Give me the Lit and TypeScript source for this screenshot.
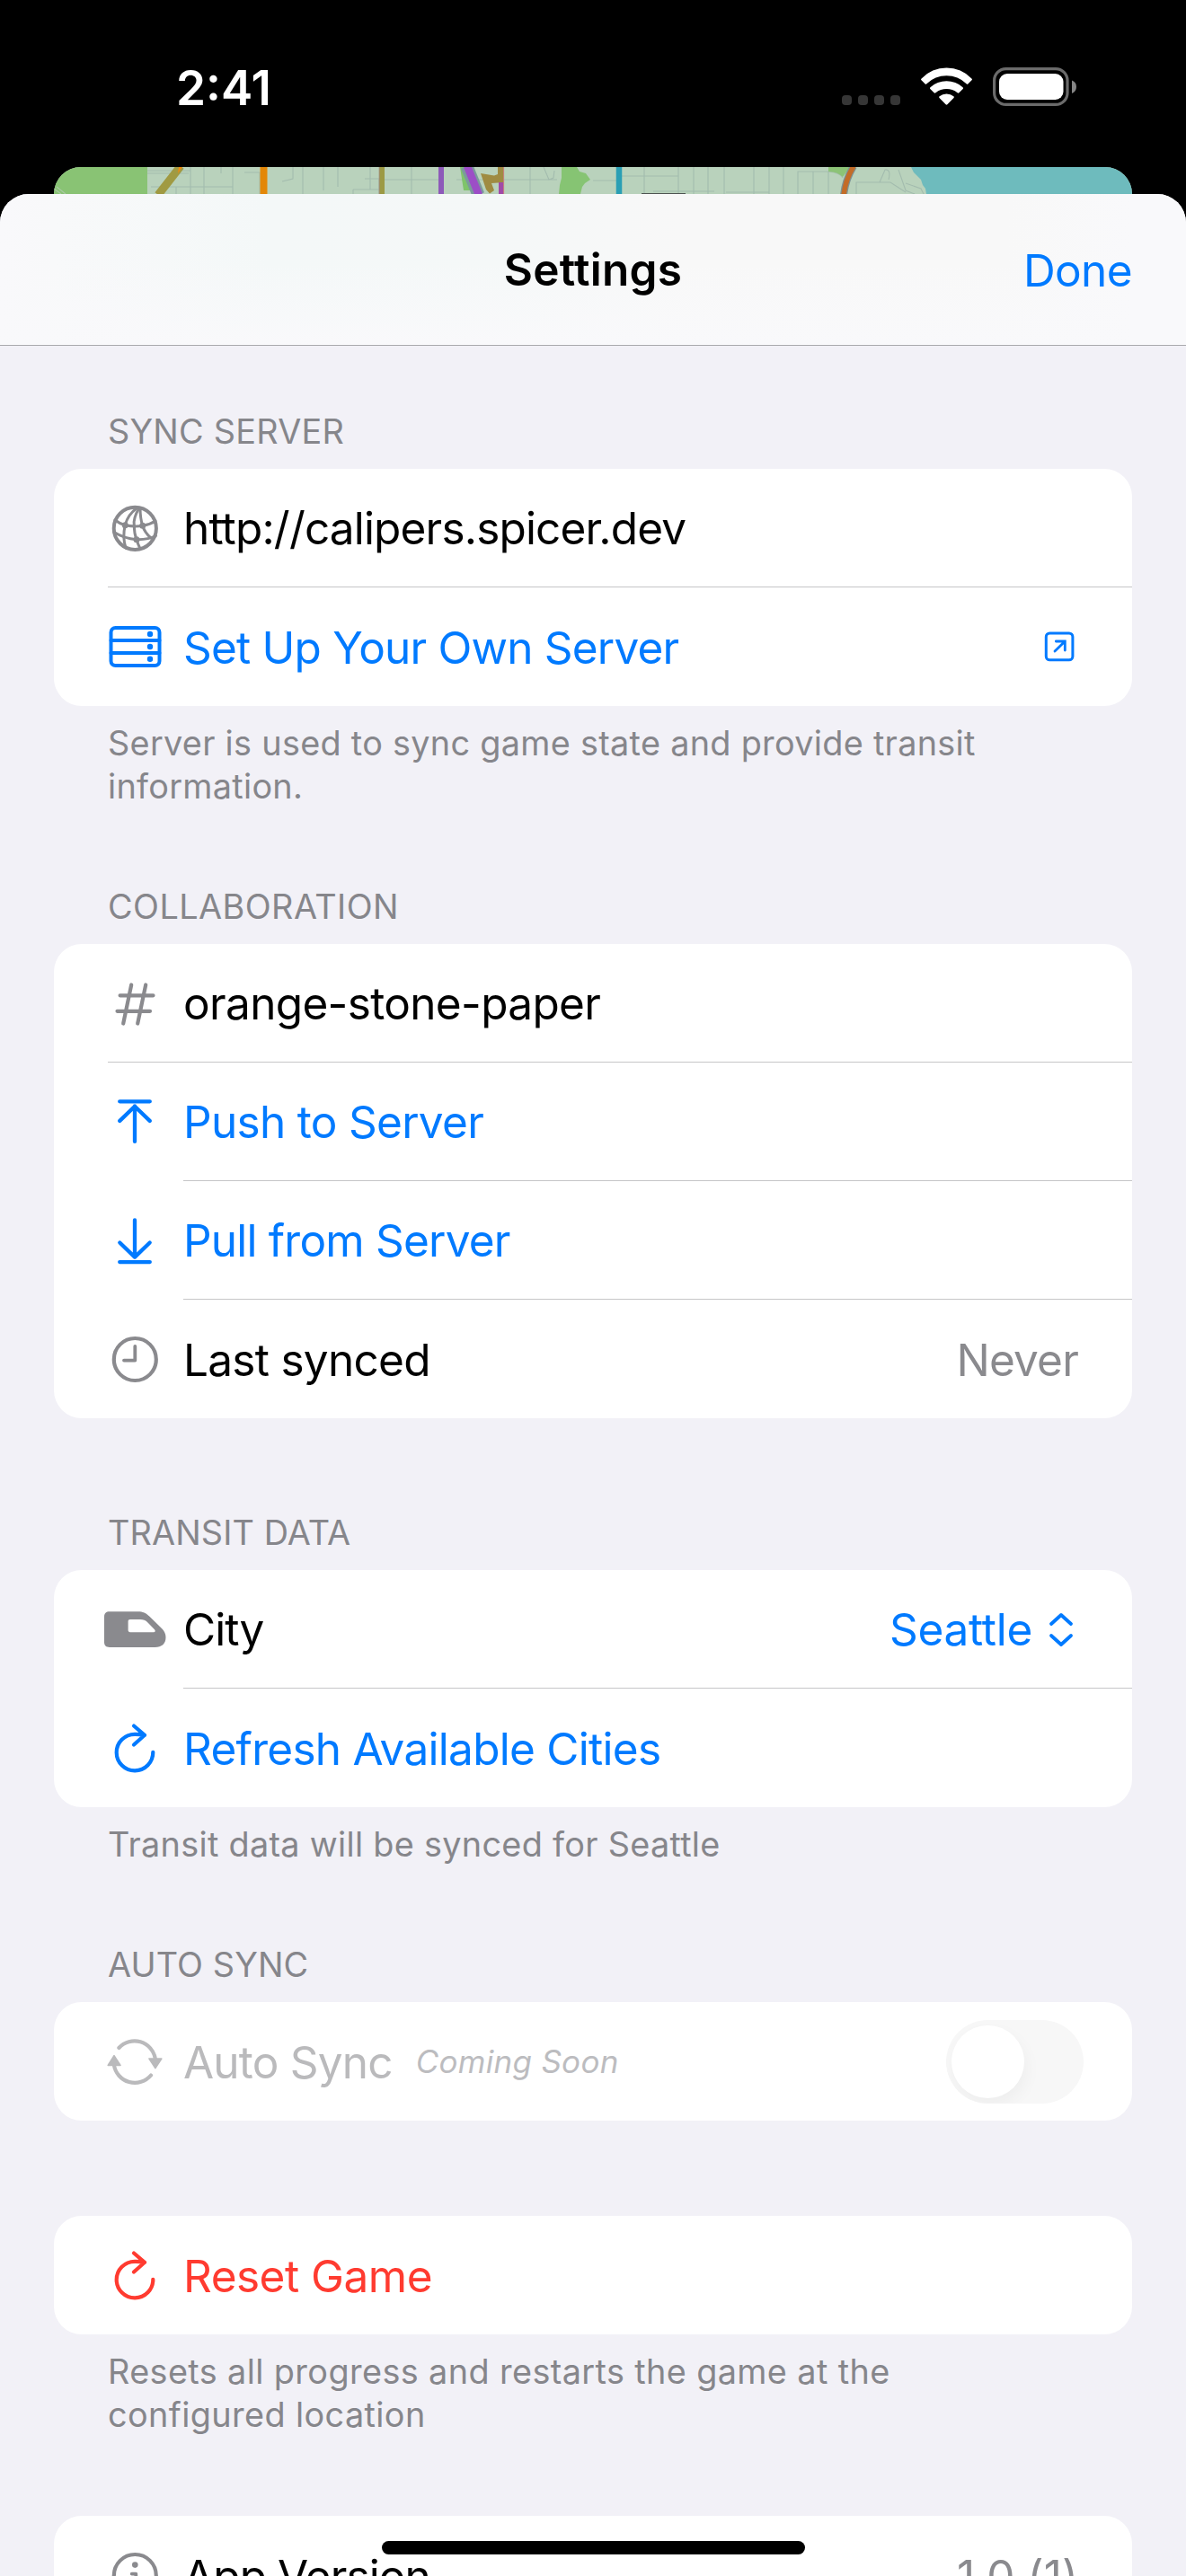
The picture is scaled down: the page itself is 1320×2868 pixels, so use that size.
import { LitElement, html, svg, css, nothing, SVGTemplateResult } from "lit";
import { customElement, property } from "lit/decorators.js";
import { classMap } from "lit/directives/class-map.js";

type Tone = "plain" | "tint" | "danger" | "dim";

interface Row {
  icon: string;
  label: string;
  spacing: number;
  tone: Tone;
  note?: string;
  value?: string;
  valueSpacing?: number;
  accessory?: "link" | "picker" | "switch";
  inset?: "wide" | "narrow";
}

interface Section {
  id: string;
  title?: string;
  titleSpacing?: number;
  rows: Row[];
  footer?: string[];
  footerSpacing?: number;
}

const SECTIONS: Section[] = [
  {
    id: "server",
    title: "SYNC SERVER",
    titleSpacing: 0.23,
    rows: [
      { icon: "globe", label: "http://calipers.spicer.dev", spacing: -0.83, tone: "plain", inset: "wide" },
      { icon: "rack", label: "Set Up Your Own Server", spacing: -0.8, tone: "tint", accessory: "link" },
    ],
    footer: ["Server is used to sync game state and provide transit", "information."],
    footerSpacing: 0.3,
  },
  {
    id: "collaboration",
    title: "COLLABORATION",
    titleSpacing: 0.45,
    rows: [
      { icon: "hash", label: "orange-stone-paper", spacing: -0.66, tone: "plain", inset: "wide" },
      { icon: "push", label: "Push to Server", spacing: -0.7, tone: "tint", inset: "narrow" },
      { icon: "pull", label: "Pull from Server", spacing: -0.79, tone: "tint", inset: "narrow" },
      { icon: "clock", label: "Last synced", spacing: -0.72, tone: "plain", value: "Never", valueSpacing: -0.8 },
    ],
  },
  {
    id: "transit",
    title: "TRANSIT DATA",
    titleSpacing: 0.12,
    rows: [
      { icon: "train", label: "City", spacing: -0.9, tone: "plain", value: "Seattle", valueSpacing: -0.29, accessory: "picker", inset: "narrow" },
      { icon: "refresh", label: "Refresh Available Cities", spacing: -0.72, tone: "tint" },
    ],
    footer: ["Transit data will be synced for Seattle"],
    footerSpacing: 0.3,
  },
  {
    id: "auto",
    title: "AUTO SYNC",
    titleSpacing: 0.12,
    rows: [{ icon: "cycle", label: "Auto Sync", spacing: -0.8, tone: "dim", note: "Coming Soon", accessory: "switch" }],
  },
  {
    id: "reset",
    rows: [{ icon: "refresh", label: "Reset Game", spacing: -0.5, tone: "danger" }],
    footer: ["Resets all progress and restarts the game at the", "configured location"],
    footerSpacing: 0.39,
  },
  {
    id: "about",
    rows: [{ icon: "info", label: "App Version", spacing: -0.9, tone: "plain", value: "1.0 (1)", valueSpacing: 0.05 }],
  },
];

/* Row icons share a 72x132 box, as tall as a row. */
const ICONS: Record<string, SVGTemplateResult> = {
  globe: svg`
    <circle cx="36.3" cy="66.3" r="23.6" stroke-width="4"/>
    <g stroke-width="3">
      <path d="M38.7 43.5Q28 51 25.3 62.7Q22 76 26 88"/>
      <path d="M41 43.5Q34 55 35.3 63Q35.3 72 38 78.7Q39.5 84 42 89"/>
      <path d="M42 43.5Q42 55 44.7 63.3Q47 71 54 77"/>
      <path d="M14 57Q19 61 25.3 62.7Q36 64.7 44.7 63.3Q53 62 59 58"/>
      <path d="M13 70.5Q24 77.5 38 78.7Q51 79 59.5 74.5"/>
    </g>
    <g fill="currentColor" stroke="none">
      <circle cx="25.3" cy="62.7" r="3.5"/><circle cx="44.7" cy="63.3" r="3.5"/><circle cx="38" cy="78.7" r="3.5"/>
    </g>`,
  rack: svg`
    <g stroke-width="4"><rect x="9.5" y="45" width="54" height="42" rx="5"/>
    <path d="M9.5 59H63.5M9.5 73H63.5"/></g>
    <g fill="currentColor" stroke="none">
      <circle cx="53" cy="52" r="3.2"/><circle cx="53" cy="66" r="3.2"/><circle cx="53" cy="79.7" r="3.2"/>
    </g>`,
  hash: svg`<path stroke-width="4.2" d="M19.6 57.3H56.5M16.5 74.8H53M32.2 45.5L23.2 88.5M48.2 45.5L39.2 88.5"/>`,
  push: svg`<path stroke-width="4.3" d="M19.2 43.3H52.8M36 48.5V87.9M19.3 64.9L36 48.8L52.7 64.9"/>`,
  pull: svg`<path stroke-width="4.3" d="M19.2 90.1H52.8M36 43.5V84M19.3 68.5L36 84.6L52.7 68.5"/>`,
  clock: svg`<circle cx="36.3" cy="66.5" r="23.5" stroke-width="4.2"/><path stroke-width="3.8" d="M36.3 52V67.6H24"/>`,
  train: svg`<path fill="currentColor" stroke="none" fill-rule="evenodd" d="M8 46.3H39.5C45 46.3 48.5 48 52.5 51.8L66 65C69 68 70.5 71 70.5 75C70.5 82 66 86 58.5 86H8C4 86 2 84 2 80.3V52C2 48.2 4 46.3 8 46.3ZM31 55C29.4 55 28.6 55.8 28.6 57.4V66.8C28.6 68.4 29.4 69.2 31 69.2H57C58.8 69.2 59.4 67.8 58 66.2L50.5 58.4C48 56 45.5 55 42 55Z"/>`,
  refresh: svg`<path stroke-width="4.2" d="M47 51.8Q41 50.7 36 50.8A20.3 20.3 0 1 0 56.3 70.8M35 41.5L47 51.8L35 62.5"/>`,
  cycle: svg`
    <path stroke-width="4.2" d="M18.4 51A23.4 23.4 0 0 1 58.8 63M54 81.5A23.4 23.4 0 0 1 12.9 70"/>
    <path fill="currentColor" stroke-width="1.6" d="M52 63H65.8L58.9 73.6ZM6.2 70.4H20L13 59.6Z"/>`,
  info: svg`<circle cx="36.3" cy="66.5" r="23.5" stroke-width="4.2"/>
    <circle cx="36.3" cy="54.6" r="3.3" fill="currentColor" stroke="none"/><path stroke-width="3.8" d="M32.7 64.6H37.3V79M32 79.5H42.5"/>`,
};

@customElement("status-bar")
class StatusBar extends LitElement {
  static styles = css`
    :host { display: flex; height: 186px; box-sizing: border-box; padding: 68px 122px 0 196px; justify-content: space-between; align-items: flex-start; color: #fff; }
    .time { font-size: 53px; font-weight: 600; line-height: 60px; }
    .signals { display: flex; gap: 23px; }
    svg { display: block; height: 60px; }
  `;
  render() {
    return html`
      <span class="time">2:41</span>
      <div class="signals">
        <svg width="65" viewBox="0 0 65 60" fill="#363636">
          ${[0, 18, 36, 54].map((x) => svg`<rect x=${x} y="38" width="11" height="11" rx="4"/>`)}
        </svg>
        <svg width="57" viewBox="0 0 57 60" fill="#fff">
          <path d="M.6 19.4A38.4 38.4 0 0 1 56.4 19.4Q57.4 20.4 56.5 21.3L52.3 25.5Q51.5 26.2 50.6 25.3A31.5 31.5 0 0 0 6.4 25.3Q5.5 26.2 4.7 25.5L.5 21.3Q-.4 20.4 .6 19.4Z"/>
          <path d="M10.4 29.2A27 27 0 0 1 46.6 29.2Q47.6 30.1 46.7 31L42.4 35.3Q41.5 36 40.6 35.2A20 20 0 0 0 16.4 35.2Q15.5 36 14.6 35.3L10.3 31Q9.4 30.1 10.4 29.2Z"/>
          <path d="M20.6 39.2A12.5 12.5 0 0 1 36.4 39.2Q37.4 40 36.5 41L29.4 48.3Q28.5 49.2 27.6 48.3L20.5 41Q19.6 40 20.6 39.2Z"/>
        </svg>
        <svg width="93" viewBox="0 0 93 60">
          <rect x="1.6" y="8.6" width="81.4" height="39.8" rx="13" fill="none" stroke="#6b6b6b" stroke-width="3.2"/>
          <rect x="7" y="14" width="71.5" height="29" rx="9" fill="#fff"/>
          <path d="M88 21.5Q93 23.5 93 28.7T88 36Z" fill="#858585"/>
        </svg>
      </div>`;
  }
}

@customElement("map-strip")
class MapStrip extends LitElement {
  static styles = css`
    :host { display: block; height: 30px; margin: 0 60px; border-radius: 30px 30px 0 0; overflow: hidden; background: #b9d2bc; }
    svg { display: block; }
  `;
  render() {
    return html`<svg width="1200" height="30" viewBox="0 0 1200 30" fill="none">
      <rect width="104" height="30" fill="#89c374"/>
      <path d="M0 24L8 30M3 22L13 30" stroke="#a9c9a4" stroke-width="1.2"/>
      <path d="M104 4H152M104 7H150M108 22H199M136 22V30M152 0V30M167 0V30M199 0V30M186 0V7M212 6H229V30M254 16L266 13V0M277 0V30M300 0V26M316 0V22M333 25H352V0M333 25V30M352 25H362M346 13H362V30M368 14H434M398 0V30M448 14H508M500 14H560M530 0V30M545 0L551 14L556 12L557 4M600 15H626M667 27H735M626 10H695M657 0V30M695 0V30M712 0V30M728 0V30M746 0V30M779 0V30M796 0V30M812 0V30M748 28H796M828 30V5H862V30M845 5V30M862 5Q875 6 878 12M893 30V17H931L948 28M919 17L925 3Q932 2 929 14M940 3L948 26L958 30M948 18L965 24L968 30" stroke="#a3bcae" stroke-width="1.1"/>
      <path d="M141 -1L116 31" stroke="#a09a42" stroke-width="9"/>
      <path d="M139 0H143L138 7Z" fill="#f08a10"/>
      <path d="M233.500 0V30" stroke="#e38708" stroke-width="8"/>
      <path d="M365 0V30" stroke="#9c9a44" stroke-width="6"/>
      <path d="M362.200 0V30" stroke="#a08a74" stroke-width="1"/>
      <path d="M431 0V30" stroke="#8d5ab9" stroke-width="6"/>
      <path d="M452 0H462L466 26H456Z" fill="#7fc46b"/>
      <path d="M459.500 -1L472.500 31" stroke="#7b9a9c" stroke-width="14"/>
      <path d="M460 -1L473 31" stroke="#9c4ec6" stroke-width="8.500"/>
      <path d="M475 7L490 9.500L494 8V0H501V17L487 18L490 26L485 29.500L481 25Z" fill="#9f8b42"/>
      <path d="M498 17V30" stroke="#a04aa8" stroke-width="6"/>
      <path d="M500.600 0V30" stroke="#c98080" stroke-width="1"/>
      <path d="M565 0H582L585 5L592 7L597 14L591 18L588 22L586 30H562L563 20L565 12Z" fill="#86c473"/>
      <path d="M629 0V30" stroke="#2a9fb4" stroke-width="6.500"/>
      <rect x="654" y="29" width="49" height="1" fill="#4e5452"/>
      <path d="M862 0H886L878 11Q872 5 862 5Z" fill="#8cc377"/>
      <path d="M890 -1Q881 14 879 31" stroke="#7d9293" stroke-width="8"/>
      <path d="M890 -1Q881 14 879 31" stroke="#c36c28" stroke-width="5.500"/>
      <path d="M954 0L957 6L961 10L965 14L967 20L970 24L971 30H1200V0Z" fill="#6ebbbd"/>
    </svg>`;
  }
}

@customElement("settings-row")
class SettingsRow extends LitElement {
  @property({ attribute: false }) row!: Row;
  @property({ type: Boolean }) last = false;

  static styles = css`
    :host { display: block; }
    .line { display: flex; align-items: center; height: 131px; padding: 0 60px 0 54px; font-size: 49.5px; line-height: 60px; }
    .line.last { height: 132px; }
    .icon { display: block; flex: none; width: 72px; height: 132px; margin-right: 18px; color: #8a8a8e; fill: none; stroke: currentColor; stroke-linecap: round; stroke-linejoin: round; }
    .label { padding-top: 1px; white-space: nowrap; }
    .tint, .tint .icon { color: #007aff; }
    .danger, .danger .icon { color: #ff3b30; }
    .dim, .dim .icon { color: #bababc; }
    .note { font-size: 35px; font-style: italic; letter-spacing: 0.29px; margin-left: 26px; color: #bcbcbf; white-space: nowrap; }
    .trail { display: flex; align-items: center; margin-left: auto; }
    .value { color: #8a8a8e; padding-top: 1px; white-space: nowrap; }
    .value.picker { color: #007aff; padding-top: 0; }
    .chevrons { display: block; margin: 0 4px 0 17px; }
    .link { display: block; margin-right: 3px; }
    .divider { height: 1px; background: #c6c6c8; margin-left: 144px; }
    .divider.wide { margin-left: 60px; }
    .switch { width: 153px; height: 93px; border-radius: 47px; background: #f7f7f7; margin: 0 -6px 0 0; box-sizing: border-box; padding: 6px; overflow: hidden; }
    .knob { width: 81px; height: 81px; border-radius: 50%; background: #fff; box-shadow: 3px 8px 18px rgba(0, 0, 0, 0.04); }
  `;

  private accessory() {
    switch (this.row.accessory) {
      case "link":
        return html`<svg class="link" width="36" height="36" viewBox="0 0 36 36" fill="none" stroke="#007aff" stroke-linejoin="round">
          <rect x="3.300" y="3" width="29.600" height="29.800" rx="4" stroke-width="3"/>
          <path d="M13 23L24 12.300M14.300 12H24.300V22" stroke-width="2.800" stroke-linecap="round" stroke-linejoin="miter"/>
        </svg>`;
      case "picker":
        return html`<svg class="chevrons" width="30" height="40" viewBox="0 0 30 40" fill="none" stroke="#007aff" stroke-width="3.800" stroke-linecap="round" stroke-linejoin="round">
          <path d="M4 14L15 4L26 14M4 27L15 37L26 27"/>
        </svg>`;
      case "switch":
        return html`<div class="switch"><div class="knob"></div></div>`;
      default:
        return nothing;
    }
  }

  render() {
    const r = this.row;
    const line = { line: true, last: this.last, [r.tone]: true };
    return html`
      <div class=${classMap(line)}>
        <svg class="icon" viewBox="0 0 72 132">${ICONS[r.icon]}</svg>
        <span class="label" style="letter-spacing:${r.spacing}px">${r.label}</span>
        ${r.note ? html`<span class="note">${r.note}</span>` : nothing}
        <div class="trail">
          ${r.value
            ? html`<span class=${classMap({ value: true, picker: r.accessory === "picker" })} style="letter-spacing:${r.valueSpacing}px">${r.value}</span>`
            : nothing}
          ${this.accessory()}
        </div>
      </div>
      ${this.last ? nothing : html`<div class=${classMap({ divider: true, wide: r.inset === "wide" })}></div>`}`;
  }
}

@customElement("app-root")
class AppRoot extends LitElement {
  static styles = css`
    :host { display: block; position: relative; height: 2868px; overflow: hidden; background: #000; font-family: Inter, "Liberation Sans", sans-serif; color: #000; }
    .sheet { height: 2652px; overflow: hidden; background: #f2f1f7; border-radius: 32px 32px 0 0; }
    .bar { display: grid; grid-template-columns: 1fr auto 1fr; align-items: center; height: 168px; padding: 0 60px; border-bottom: 1px solid #a9a9ad; font-size: 49.5px; line-height: 60px;
      background: linear-gradient(to bottom, rgba(249, 249, 251, 0) 45%, #f9f9fb 100%), linear-gradient(to right, #f9f9fb 0, #f8f9fa 60px, #f4f8f8 300px, #f5f8f8 560px, #f8f8f8 760px, #f8f8f8 1120px, #f9f9fb 1260px); }
    .title { grid-column: 2; font-weight: 600; letter-spacing: 0.28px; }
    .done { justify-self: end; color: #007aff; letter-spacing: -0.6px; padding-top: 1px; }
    .group { padding: 0 60px; }
    .server { margin-top: 71px; }
    .collaboration, .auto { margin-top: 86px; }
    .transit { margin-top: 103px; }
    .reset { margin-top: 106px; }
    .about { margin-top: 89px; }
    .heading { padding-left: 60px; margin-bottom: 18px; font-size: 37.8px; line-height: 48px; color: #86868b; }
    .card { background: #fff; border-radius: 31px; overflow: hidden; }
    .footer { padding: 17px 60px 0; font-size: 37.8px; line-height: 48px; color: #86868b; white-space: nowrap; }
    .home { position: absolute; left: 425px; bottom: 24px; width: 471px; height: 15px; border-radius: 8px; background: #000; }
  `;

  private group(s: Section) {
    return html`<section class=${classMap({ group: true, [s.id]: true })}>
      ${s.title ? html`<div class="heading" style="letter-spacing:${s.titleSpacing}px">${s.title}</div>` : nothing}
      <div class="card">
        ${s.rows.map((r, i) => html`<settings-row .row=${r} ?last=${i === s.rows.length - 1}></settings-row>`)}
      </div>
      ${s.footer
        ? html`<div class="footer" style="letter-spacing:${s.footerSpacing}px">${s.footer.map((t) => html`<div>${t}</div>`)}</div>`
        : nothing}
    </section>`;
  }

  render() {
    return html`
      <status-bar></status-bar>
      <map-strip></map-strip>
      <main class="sheet">
        <header class="bar"><span class="title">Settings</span><span class="done">Done</span></header>
        ${SECTIONS.map((s) => this.group(s))}
      </main>
      <div class="home"></div>`;
  }
}
